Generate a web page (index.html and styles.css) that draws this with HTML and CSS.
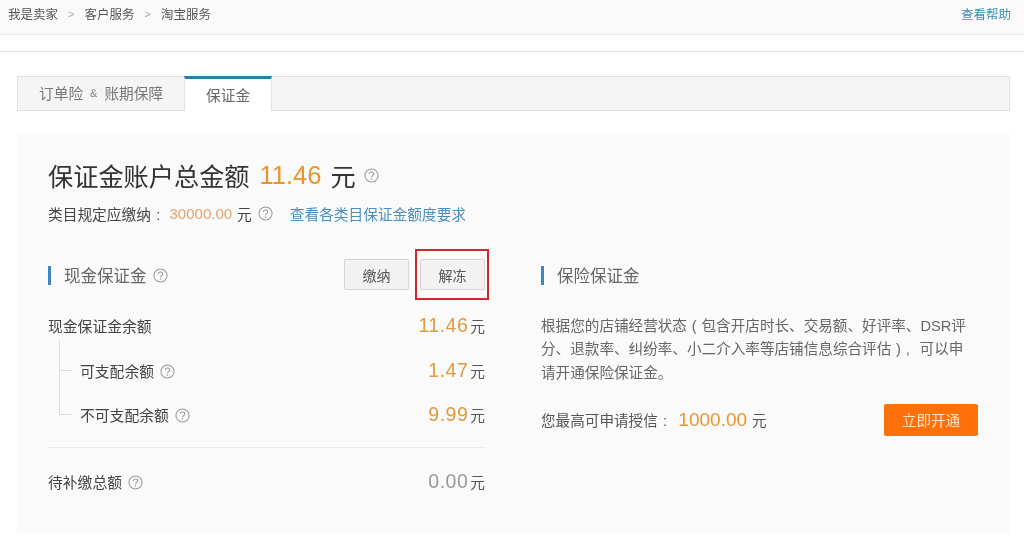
FILE: index.html
```html
<!DOCTYPE html>
<html lang="zh-CN">
<head>
<meta charset="utf-8">
<title>保证金</title>
<link rel="stylesheet" href="styles.css">
</head>
<body>
<header class="topbar">
  <nav class="crumbs"><span>我是卖家</span><i>&gt;</i><span>客户服务</span><i>&gt;</i><span>淘宝服务</span></nav>
  <a class="help">查看帮助</a>
</header>
<div class="strip"></div>
<main class="page">
  <div class="tabs">
    <div class="tab">订单险<small>&amp;</small>账期保障</div>
    <div class="tab active">保证金</div>
  </div>
  <section class="panel">
    <h1 class="total">保证金账户总金额<b>11.46</b><span class="unit">元</span>
      <svg class="q q-title" viewBox="0 0 16 16"><use href="#qm"/></svg></h1>
    <p class="rule"><span>类目规定应缴纳<span class="fw">:</span></span><b>30000.00</b><span class="yuan">元</span>
      <svg class="q" viewBox="0 0 16 16"><use href="#qm"/></svg><a>查看各类目保证金额度要求</a></p>
    <div class="cols">
      <div class="col">
        <div class="col-head">
          <h2>现金保证金<svg class="q" viewBox="0 0 16 16"><use href="#qm"/></svg></h2>
          <div class="btns">
            <button class="btn">缴纳</button>
            <button class="btn marked">解冻</button>
          </div>
        </div>
        <div class="row first"><span>现金保证金余额</span><span class="val"><b>11.46</b>元</span></div>
        <div class="tree">
          <div class="row sub"><span>可支配余额<svg class="q" viewBox="0 0 16 16"><use href="#qm"/></svg></span><span class="val"><b>1.47</b>元</span></div>
          <div class="row sub last"><span>不可支配余额<svg class="q" viewBox="0 0 16 16"><use href="#qm"/></svg></span><span class="val"><b>9.99</b>元</span></div>
        </div>
        <div class="row due"><span>待补缴总额<svg class="q" viewBox="0 0 16 16"><use href="#qm"/></svg></span><span class="val"><b class="grey">0.00</b>元</span></div>
      </div>
      <div class="col">
        <div class="col-head"><h2>保险保证金</h2></div>
        <p class="desc">根据您的店铺经营状态 ( 包含开店时长、交易额、好评率、DSR评分、退款率、纠纷率、小二介入率等店铺信息综合评估 ) ,&nbsp; 可以申请开通保险保证金。</p>
        <div class="credit">
          <span class="limit"><span>您最高可申请授信<span class="fw">:</span></span><b>1000.00</b><span class="yuan">元</span></span>
          <button class="open">立即开通</button>
        </div>
      </div>
    </div>
  </section>
</main>
<svg class="defs" width="0" height="0" aria-hidden="true">
  <symbol id="qm" viewBox="0 0 16 16">
    <circle cx="8" cy="8" r="7" fill="none" stroke="currentColor" stroke-width="1.1"/>
    <path d="M5.6 6.3C5.7 4.9 6.7 4.2 8 4.2c1.4 0 2.4.8 2.4 2 0 1-.6 1.5-1.3 2-.7.4-1.1.8-1.1 1.7" fill="none" stroke="currentColor" stroke-width="1.1"/>
    <circle cx="8" cy="11.7" r=".8" fill="currentColor"/>
  </symbol>
</svg>
</body>
</html>
```
FILE: styles.css
```css
* { box-sizing: border-box; }
html, body { margin: 0; padding: 0; }
body {
  width: 1024px;
  height: 541px;
  overflow: hidden;
  background: #fff;
  color: #444;
  font-family: "Liberation Sans", "Noto Sans CJK SC", sans-serif;
  font-size: 14px;
  filter: blur(.35px);
}
.defs { position: absolute; }
.fw { display: inline-block; width: 1em; text-align: center; }
.topbar {
  height: 35px;
  padding: 0 13px 7px 8px;
  display: flex;
  align-items: center;
  justify-content: space-between;
  background: #fafafa;
  border-bottom: 1px solid #e8e8e8;
}
.crumbs { font-size: 12.5px; color: #555; display: flex; align-items: center; }
.crumbs i { font-style: normal; color: #aaa; margin: 0 10px; font-size: 11px; }
.help { font-size: 12.5px; color: #3d8fb5; }
.strip { height: 17px; border-bottom: 1px solid #e4e4e4; }
.page { padding: 24px 14px 0 17px; }
.tabs {
  height: 35px;
  display: flex;
  background: #f5f5f5;
  border: 1px solid #e2e2e2;
}
.tab {
  width: 167px;
  margin-left: -1px;
  padding-left: 22px;
  padding-bottom: 3px;
  display: flex;
  align-items: center;
  font-size: 14.7px;
  color: #777;
}
.tab small { font-size: 11px; margin: 2px 7px 0; color: #888; }
.tab.active {
  width: 88px;
  margin-left: 0;
  height: 35px;
  margin-top: -1px;
  padding: 0 0 2px 21px;
  background: #fff;
  border-top: 3px solid #2a7fa8;
  border-right: 1px solid #e2e2e2;
  border-left: 1px solid #e2e2e2;
  color: #666;
}
.panel {
  height: 399px;
  margin-top: 23px;
  padding: 24px 31px 0;
  background: #fafafa;
}
.total {
  margin: 0;
  height: 34px;
  display: flex;
  align-items: center;
  font-size: 25.2px;
  font-weight: 400;
  color: #333;
}
.total b { margin: 0 9px 0 10px; font-size: 25.5px; font-weight: 400; color: #e8952f; }
.q { width: 15px; height: 15px; margin-left: 6px; color: #999; flex: none; vertical-align: -2px; }
.q-title { margin-left: 8px; }
.rule {
  margin: 10px 0 0;
  height: 22px;
  display: flex;
  align-items: center;
  font-size: 14.7px;
  color: #444;
}
.rule b { margin-left: 4px; font-weight: 400; font-size: 15px; color: #e3a46c; }
.yuan { margin-left: 5px; }
.rule a { margin-left: 17px; font-size: 14.7px; color: #4a8fc0; }
.cols { margin-top: 35px; display: grid; grid-template-columns: 437px 437px; column-gap: 56px; }
.col-head { height: 32px; display: flex; align-items: center; justify-content: space-between; }
.col-head h2 {
  margin: 0;
  padding-left: 13px;
  display: flex;
  align-items: center;
  height: 19px;
  border-left: 3px solid #3f87c4;
  font-size: 16.5px;
  font-weight: 400;
  color: #666;
}
.btns { display: flex; gap: 11px; margin-top: -1px; }
.btn {
  width: 65px;
  height: 31px;
  padding: 0;
  background: #f2f2f2;
  border: 1px solid #d4d4d4;
  border-radius: 2px;
  font: inherit;
  font-size: 14px;
  color: #555;
}
.marked { position: relative; }
.marked::after {
  content: "";
  box-sizing: border-box;
  position: absolute;
  left: -6px;
  top: -11px;
  width: 74px;
  height: 51px;
  border: 2px solid #d0262c;
}
.row { display: flex; align-items: center; justify-content: space-between; font-size: 14.8px; color: #444; }
.row.first { margin-top: 15px; height: 38px; }
.val { font-size: 14.7px; color: #555; }
.val b { margin-right: 2px; font-size: 19.5px; letter-spacing: .5px; font-weight: 400; color: #e09a3c; }
.val b.grey { color: #999; }
.tree { position: relative; padding: 4px 0 11px 32px; border-bottom: 1px solid #ececec; }
.tree::before {
  content: "";
  position: absolute;
  left: 11px;
  top: -4px;
  width: 12px;
  height: 74px;
  border-left: 1px solid #dcdcdc;
  border-bottom: 1px solid #dcdcdc;
}
.sub { height: 44px; position: relative; }
.sub:first-child::before {
  content: "";
  position: absolute;
  left: -20px;
  top: 22px;
  width: 12px;
  border-top: 1px solid #dcdcdc;
}
.due { height: 66px; }
.desc { margin: 24px 0 0; line-height: 23.3px; font-size: 14.6px; word-spacing: .8px; color: #666; width: 430px; }
.credit { margin-top: 19px; display: flex; align-items: center; justify-content: space-between; }
.limit { font-size: 14.6px; color: #555; display: flex; align-items: center; }
.limit b { margin-left: 6px; font-size: 19px; font-weight: 400; color: #e8952f; }
.open {
  width: 94px;
  height: 32px;
  padding: 0;
  background: #ff6f0a;
  border: 0;
  border-radius: 2px;
  font: inherit;
  font-size: 14.6px;
  color: #ffe3c8;
}
```
